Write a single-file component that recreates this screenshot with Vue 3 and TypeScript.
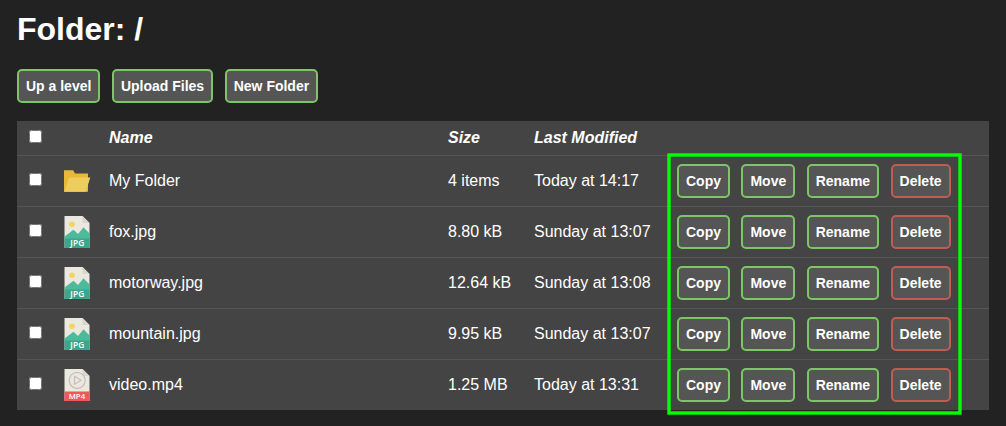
<script setup lang="ts">
type Kind = 'folder' | 'jpg' | 'mp4'

interface Entry {
  name: string
  size: string
  modified: string
  kind: Kind
}

const toolbar: string[] = ['Up a level', 'Upload Files', 'New Folder']
const actions: string[] = ['Copy', 'Move', 'Rename', 'Delete']

const entries: Entry[] = [
  { name: 'My Folder', size: '4 items', modified: 'Today at 14:17', kind: 'folder' },
  { name: 'fox.jpg', size: '8.80 kB', modified: 'Sunday at 13:07', kind: 'jpg' },
  { name: 'motorway.jpg', size: '12.64 kB', modified: 'Sunday at 13:08', kind: 'jpg' },
  { name: 'mountain.jpg', size: '9.95 kB', modified: 'Sunday at 13:07', kind: 'jpg' },
  { name: 'video.mp4', size: '1.25 MB', modified: 'Today at 13:31', kind: 'mp4' },
]
</script>

<template>
  <main class="page">
    <h1 class="title">Folder: /</h1>
    <div class="toolbar">
      <button v-for="label in toolbar" :key="label" class="btn">{{ label }}</button>
    </div>

    <div class="table">
      <div class="row head">
        <input class="check" type="checkbox" />
        <span></span>
        <span>Name</span>
        <span>Size</span>
        <span>Last Modified</span>
        <span></span>
      </div>
      <div v-for="entry in entries" :key="entry.name" class="row">
        <input class="check" type="checkbox" />
        <svg v-if="entry.kind === 'folder'" class="icon" viewBox="0 0 32 32">
          <path d="M3 5.2h9.200l1.800 3.200h12.500q.5 0 .5 .5V26.800H3z" fill="#e8b936" />
          <path d="M8.200 12.600H29.300L24.800 26.800H3.200z" fill="#eccd5e" />
        </svg>
        <svg v-else-if="entry.kind === 'jpg'" class="icon" viewBox="0 0 32 32">
          <path d="M3.500 0H21.500L28.500 7V32H3.500z" fill="#e9e9e0" />
          <path d="M21.500 0V7H28.500z" fill="#d9d7ca" />
          <circle cx="11" cy="8.300" r="2.800" fill="#f3d55b" />
          <path d="M3.500 20.500L12.500 13.700l4.500 4.300 5.500-6.800 6 6.300V23.500h-25z" fill="#4fba9b" />
          <path d="M3.500 22.500h25V32h-25z" fill="#3fa58a" />
          <text x="9.200" y="30" textLength="14" lengthAdjust="spacing" class="tag">JPG</text>
        </svg>
        <svg v-else class="icon" viewBox="0 0 32 32">
          <path d="M3.500 0H21.500L28.500 7V32H3.500z" fill="#e9e9e0" />
          <path d="M21.500 0V7H28.500z" fill="#d9d7ca" />
          <circle cx="16.200" cy="11.300" r="8" fill="none" stroke="#c8bdb8" stroke-width="1.200" />
          <path d="M13.500 7.300L20 11.300L13.500 15.300z" fill="none" stroke="#c8bdb8" stroke-width="1.200" />
          <path d="M3.500 22.500h25V32h-25z" fill="#f0585d" />
          <text x="7.700" y="30" textLength="16.400" lengthAdjust="spacingAndGlyphs" class="tag small">MP4</text>
        </svg>
        <span>{{ entry.name }}</span>
        <span>{{ entry.size }}</span>
        <span>{{ entry.modified }}</span>
        <div class="actions">
          <button
            v-for="action in actions"
            :key="action"
            class="btn"
            :class="{ danger: action === 'Delete' }"
          >{{ action }}</button>
        </div>
      </div>
      <svg class="highlight" viewBox="0 0 295 262">
        <rect x="2" y="2" width="291" height="258" fill="none" stroke="#0f0" stroke-width="3.400" />
      </svg>
    </div>
  </main>
</template>

<style>
body {
  background: #222;
}
</style>

<style scoped>
.page {
  box-sizing: border-box;
  height: 426px;
  padding: 11px 17px 0;
  background: #222;
  color: #fff;
  font: 16px/18px "Liberation Sans", Arial, sans-serif;
}

.title {
  margin: 0 0 22px;
  font-size: 32px;
  line-height: 36px;
  font-weight: bold;
}

.toolbar {
  display: flex;
  gap: 11.550px;
  margin-bottom: 18px;
}

.btn {
  box-sizing: border-box;
  height: 34px;
  margin: 0;
  padding: 0 7px;
  border: 2px solid #7dc567;
  border-radius: 5px;
  background: #555;
  color: #fff;
  font: bold 14px/16px "Liberation Sans", Arial, sans-serif;
  white-space: nowrap;
}

.danger {
  border-color: #c15c53;
}

.table {
  position: relative;
  background: #444;
}

.row {
  display: grid;
  grid-template-columns: 32px 48px 339px 86px 143px 1fr;
  align-items: center;
  height: 50px;
  padding-left: 12px;
  border-top: 1px solid #555;
}

.head {
  height: 34px;
  border-top: 0;
  font-weight: bold;
  font-style: italic;
}

.check {
  width: 13px;
  height: 13px;
  margin: 0 0 3px;
}

.icon {
  width: 32px;
  height: 32px;
}

.tag {
  fill: #fff;
  font: 600 8.300px "Open Sans", sans-serif;
}

.small {
  font-size: 7.800px;
}

.actions {
  display: flex;
  gap: 11.450px;
}

.highlight {
  position: absolute;
  left: 650px;
  top: 32px;
  width: 295px;
  height: 262px;
}
</style>
